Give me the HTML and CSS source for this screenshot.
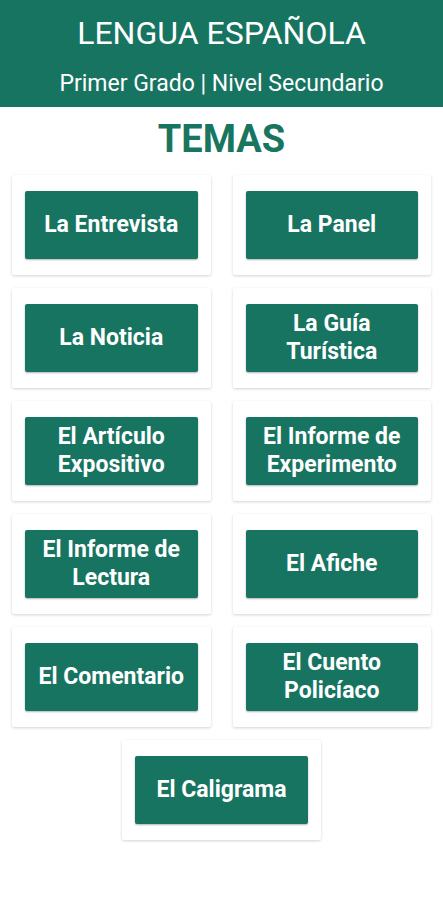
FILE: index.html
```html
<!DOCTYPE html>
<html lang="es">
<head>
    <meta charset="UTF-8">
    <meta name="viewport" content="width=device-width, initial-scale=1.0">
    <title>Lengua Española - Temas</title>
    <link rel="stylesheet" href="styles.css">
</head>
<body>
    <header class="header">
        <h1 class="header-title">LENGUA ESPAÑOLA</h1>
        <p class="header-sub">Primer Grado | Nivel Secundario</p>
    </header>

    <h2 class="section-title">TEMAS</h2>

    <div class="topics">
        <div class="card"><button class="topic-btn">La Entrevista</button></div>
        <div class="card"><button class="topic-btn">La Panel</button></div>
        <div class="card"><button class="topic-btn">La Noticia</button></div>
        <div class="card"><button class="topic-btn">La Guía<br>Turística</button></div>
        <div class="card"><button class="topic-btn">El Artículo<br>Expositivo</button></div>
        <div class="card"><button class="topic-btn">El Informe de<br>Experimento</button></div>
        <div class="card"><button class="topic-btn">El Informe de<br>Lectura</button></div>
        <div class="card"><button class="topic-btn">El Afiche</button></div>
        <div class="card"><button class="topic-btn">El Comentario</button></div>
        <div class="card"><button class="topic-btn">El Cuento<br>Policíaco</button></div>
        <div class="card"><button class="topic-btn">El Caligrama</button></div>
    </div>
</body>
</html>
```

FILE: styles.css
```css
body {
    margin: 0;
    font-family: Roboto, "Liberation Sans", Arial, sans-serif;
    background: #ffffff;
}
.header {
    background-color: #177461;
    color: #ffffff;
    text-align: center;
    height: 107px;
    box-sizing: border-box;
    padding-top: 13px;
}
.header-title {
    margin: 0;
    font-size: 32px;
    font-weight: 400;
    line-height: 40px;
}
.header-sub {
    margin: 16px 0 0;
    font-size: 23px;
    line-height: 30px;
}
.section-title {
    margin: 0;
    padding: 11px 0 15px;
    text-align: center;
    color: #18765f;
    font-size: 38px;
    font-weight: 700;
    line-height: 42px;
}
.topics {
    display: flex;
    flex-wrap: wrap;
    justify-content: center;
    gap: 13px 22px;
    padding: 0 12px 20px;
}
.card {
    width: calc((100% - 22px) / 2);
    box-sizing: border-box;
    padding: 16px 13px;
    background: #ffffff;
    border-radius: 2px;
    box-shadow: 0 1px 3px rgba(0, 0, 0, 0.18);
}
.topic-btn {
    display: flex;
    align-items: center;
    justify-content: center;
    width: 100%;
    height: 68px;
    border: none;
    border-radius: 2px;
    background-color: #177461;
    color: #ffffff;
    font-family: Roboto, "Liberation Sans", Arial, sans-serif;
    font-size: 23px;
    font-weight: 700;
    line-height: 28px;
    text-align: center;
    box-shadow: 0 1px 2px rgba(0, 0, 0, 0.3);
}
```
